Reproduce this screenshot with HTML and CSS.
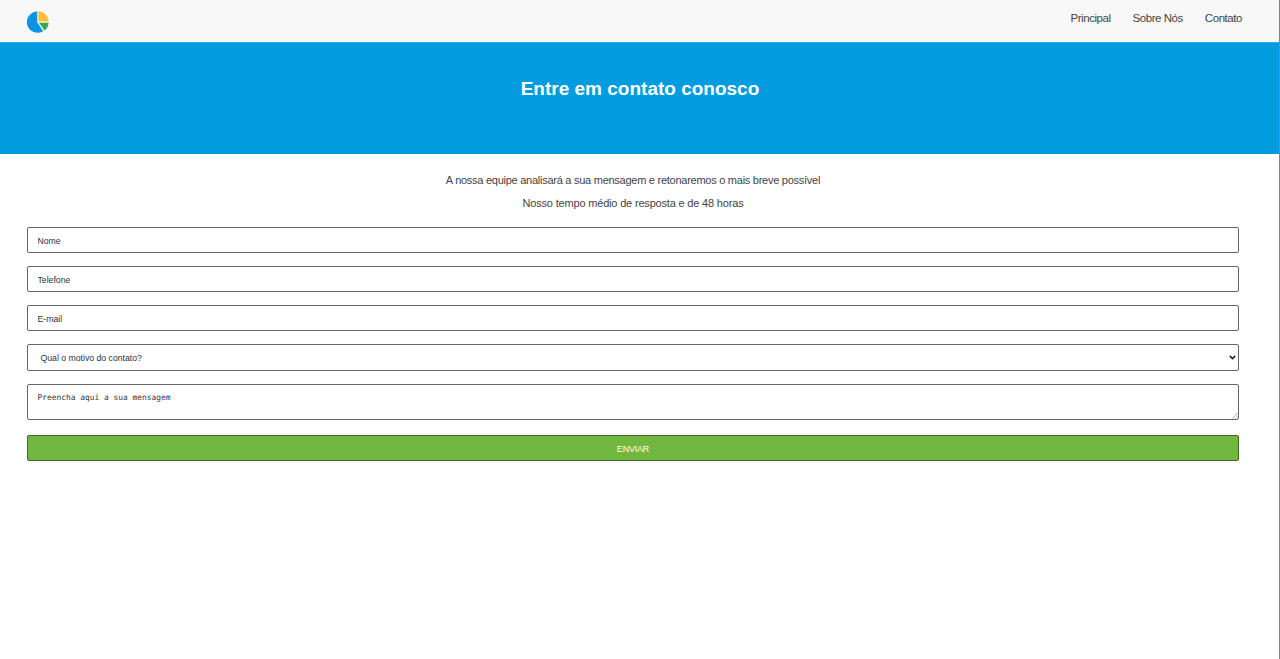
FILE: index.html
```html
<!DOCTYPE html>
<html lang="pt-BR">
<head>
<meta charset="utf-8">
<title>Contato</title>
<link rel="stylesheet" href="styles.css">
</head>
<body>
<header class="topbar">
  <svg class="logo" viewBox="0 0 22 22" aria-hidden="true">
    <path fill="#0b93e6" d="M10.2 0.4V11.2L16.2 20.2A10.7 10.7 0 1 1 10.2 0.4Z"/>
    <path fill="#fdbd39" d="M11.3 0.2A10.5 10.5 0 0 1 21.6 10.5H11.3Z"/>
    <path fill="#35a853" d="M11.9 11.8H21.6A10.5 10.5 0 0 1 17.6 19.6Z"/>
  </svg>
  <nav class="menu">
    <a>Principal</a>
    <a>Sobre Nós</a>
    <a>Contato</a>
  </nav>
</header>
<section class="banner"><h1>Entre em contato conosco</h1></section>
<main class="content">
  <p class="intro">A nossa equipe analisará a sua mensagem e retonaremos o mais breve possível</p>
  <p class="intro intro-time">Nosso tempo médio de resposta e de 48 horas</p>
  <form class="form">
    <input class="field" type="text" placeholder="Nome">
    <input class="field" type="text" placeholder="Telefone">
    <input class="field" type="text" placeholder="E-mail">
    <div class="field select"><span>Qual o motivo do contato?</span>
      <svg class="chevron" viewBox="0 0 7 5" aria-hidden="true"><path d="M0.8 0.9L3.5 3.6L6.2 0.9"/></svg>
    </div>
    <div class="field message"><span>Preencha aquí a sua mensagem</span>
      <svg class="grip" viewBox="0 0 6 6" aria-hidden="true"><path d="M0.5 5.5L5.5 0.5M3.5 5.5L5.5 3.5"/></svg>
    </div>
    <button class="send" type="button">ENVIAR</button>
  </form>
</main>
</body>
</html>
```
FILE: styles.css
```css
* { box-sizing: border-box; }
body {
  margin: 0;
  height: 659px;
  overflow: hidden;
  background: #fff;
  border-right: 1px solid #858585;
  color: #444;
  font-family: "Liberation Sans", Arial, sans-serif;
}
.topbar {
  display: flex;
  justify-content: space-between;
  height: 42px;
  padding: 11px 37px 0 27px;
  background: #f8f8f8;
}
.logo { width: 22px; height: 22px; }
.menu {
  display: flex;
  gap: 22px;
  font-size: 11.5px;
  line-height: 14px;
  letter-spacing: -0.45px;
}
.banner {
  height: 112px;
  padding-top: 35px;
  margin-right: -1px;
  border-top: 1px solid #2faae2;
  background: #019cdf;
  color: #fff;
  text-align: center;
}
.banner h1 { margin: 0; font-size: 19px; line-height: 22px; }
.content { padding: 19px 40px 0 27px; }
.intro {
  margin: 0 0 9px;
  font-size: 11px;
  line-height: 14px;
  letter-spacing: -0.26px;
  text-align: center;
}
.intro-time { letter-spacing: -0.18px; }
.form { display: flex; flex-direction: column; padding-top: 8px; }
.field {
  display: block;
  width: 100%;
  height: 26px;
  margin: 0 0 13px;
  padding: 1px 9.5px 0;
  border: 1px solid #666;
  border-radius: 2px;
  background: #fff;
  color: #333;
  font-family: "Liberation Sans", Arial, sans-serif;
  font-size: 8.7px;
}
.field::placeholder { color: #333; opacity: 1; }
.select {
  display: flex;
  align-items: center;
  justify-content: space-between;
  height: 27px;
  padding: 0 2px 0 12.5px;
}
.chevron { width: 7px; height: 5px; fill: none; stroke: #222; stroke-width: 1.5; }
.message {
  display: flex;
  justify-content: space-between;
  height: 36px;
  margin-bottom: 15px;
  padding: 7px 0 0 9.5px;
  font-family: "DejaVu Sans Mono", monospace;
  font-size: 7.9px;
  line-height: 12px;
}
.grip { align-self: flex-end; width: 6px; height: 6px; fill: none; stroke: #888; stroke-width: 0.7; }
.send {
  height: 26px;
  padding: 1px 0 0;
  border: 1px solid #44682c;
  border-radius: 2px;
  background: #72b840;
  color: #fff;
  font-family: "Liberation Sans", Arial, sans-serif;
  font-size: 9px;
  letter-spacing: -0.2px;
}
```
